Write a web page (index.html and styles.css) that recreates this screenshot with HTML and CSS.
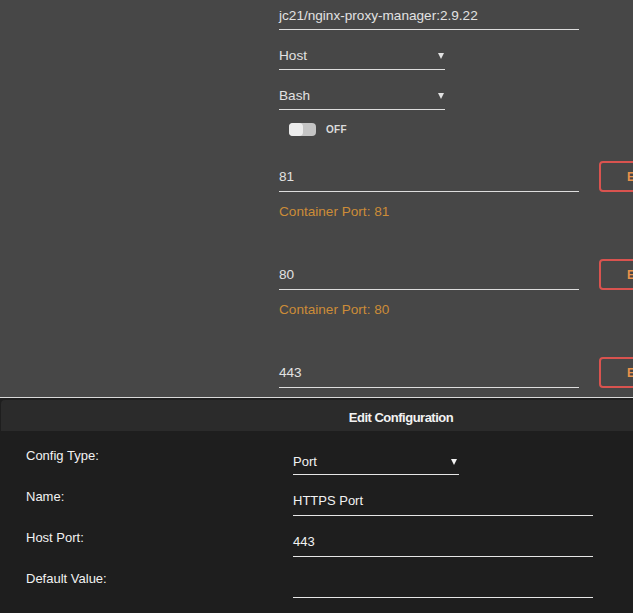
FILE: index.html
```html
<!DOCTYPE html>
<html lang="en">
<head>
    <meta charset="UTF-8">
    <meta name="viewport" content="width=device-width, initial-scale=1.0">
    <title>Update Container</title>
    <link rel="stylesheet" href="styles.css">
</head>
<body>
    <div class="docker-form">
        <div class="field-line wide">jc21/nginx-proxy-manager:2.9.22</div>
        <div class="field-line select">Host <span class="arrow"></span></div>
        <div class="field-line select">Bash <span class="arrow"></span></div>
        <div class="switch-row">
            <span class="switch"><span class="knob"></span></span>
            <span class="switch-label">OFF</span>
        </div>

        <div class="port-row">
            <div class="field-line wide port">81</div>
            <button class="edit-btn">EDIT</button>
        </div>
        <div class="port-note">Container Port: 81</div>

        <div class="port-row">
            <div class="field-line wide port">80</div>
            <button class="edit-btn">EDIT</button>
        </div>
        <div class="port-note">Container Port: 80</div>

        <div class="port-row">
            <div class="field-line wide port">443</div>
            <button class="edit-btn">EDIT</button>
        </div>
    </div>

    <div class="popup-frame">
        <div class="config-popup">
            <div class="popup-title">Edit Configuration</div>
            <div class="config-row">
                <div class="config-label">Config Type:</div>
                <div class="config-value select">Port <span class="arrow"></span></div>
            </div>
            <div class="config-row">
                <div class="config-label">Name:</div>
                <div class="config-value">HTTPS Port</div>
            </div>
            <div class="config-row">
                <div class="config-label">Host Port:</div>
                <div class="config-value">443</div>
            </div>
            <div class="config-row">
                <div class="config-label">Default Value:</div>
                <div class="config-value"></div>
            </div>
        </div>
    </div>
</body>
</html>
```

FILE: styles.css
```css
html, body {
    margin: 0;
    padding: 0;
    overflow: hidden;
}
body {
    background-color: #1e1e1e;
    font-family: "Liberation Sans", Arial, sans-serif;
    width: 633px;
    height: 613px;
}
.docker-form {
    background: #474747;
    height: 398px;
    padding-left: 279px;
    overflow: hidden;
    box-sizing: border-box;
    border-bottom: 1px solid #d8d8d8;
    color: #e2e2e2;
    font-size: 13.6px;
}
.field-line {
    padding: 8px 0 5px;
    line-height: 16px;
    border-bottom: 1px solid #dedede;
    box-sizing: border-box;
}
.field-line.wide {
    width: 300px;
    flex-shrink: 0;
}
.field-line.select {
    width: 166px;
    margin-top: 10px;
    display: flex;
    justify-content: space-between;
    align-items: center;
}
.arrow {
    width: 0;
    height: 0;
    border-left: 3px solid transparent;
    border-right: 3px solid transparent;
    border-top: 6px solid #e2e2e2;
    margin-right: 1px;
}
.switch-row {
    display: flex;
    align-items: center;
    gap: 10px;
    margin: 13px 0 0 10px;
    height: 13px;
}
.switch {
    width: 27px;
    height: 13px;
    background: #c4c4c4;
    border-radius: 4px;
    display: flex;
}
.knob {
    width: 14px;
    height: 13px;
    background: #ececec;
    border-radius: 4px;
}
.switch-label {
    font-size: 10px;
    font-weight: bold;
    letter-spacing: 0.3px;
    color: #dcdcdc;
}
.port-row {
    display: flex;
    gap: 20px;
    margin-top: 25px;
}
.port-row + .port-note + .port-row {
    margin-top: 39px;
}
.field-line.port {
    padding: 8px 0 6px;
    height: 31px;
}
.edit-btn {
    width: 90px;
    height: 31px;
    flex-shrink: 0;
    background: transparent;
    border: 2px solid #d9534f;
    border-radius: 4px;
    color: #e8924a;
    font-family: "Liberation Sans", Arial, sans-serif;
    font-size: 12px;
    font-weight: bold;
    text-align: left;
    padding: 0 0 0 26px;
}
.port-note {
    color: #cc8c38;
    line-height: 16px;
    margin-top: 12px;
}
.popup-frame {
    overflow: hidden;
    width: 633px;
}
.config-popup {
    width: 800px;
    margin-top: 2px;
    margin-left: 1px;
    color: #f2f2f2;
    font-size: 13px;
}
.popup-title {
    background: #2b2b2b;
    border-radius: 4px 4px 0 0;
    height: 31px;
    line-height: 35px;
    text-align: center;
    font-weight: bold;
    letter-spacing: -0.5px;
    font-size: 13px;
}
.config-row {
    display: flex;
    height: 41px;
    margin-left: 25px;
}
.popup-title + .config-row {
    margin-top: 3px;
}
.config-label {
    width: 267px;
    padding-top: 14px;
    line-height: 16px;
}
.config-value {
    width: 300px;
    box-sizing: border-box;
    padding: 18px 0 6px;
    line-height: 16px;
    height: 41px;
    border-bottom: 1px solid #e6e6e6;
}
.config-value.select {
    width: 166px;
    padding-top: 20px;
    padding-bottom: 4px;
    display: flex;
    justify-content: space-between;
    align-items: center;
}
.config-value .arrow {
    border-top-color: #f2f2f2;
    margin-right: 2px;
}
```
